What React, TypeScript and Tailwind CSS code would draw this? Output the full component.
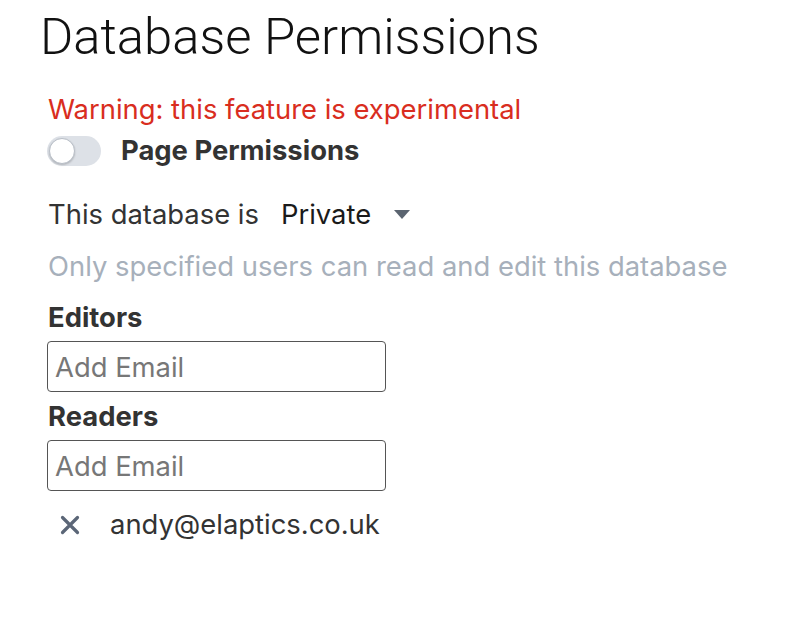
import React from "react";

export default function App() {
  return (
    <div className="w-[800px] h-[617px] bg-white pl-[40px] pt-[7px]" style={{ fontFamily: "Inter, 'Noto Sans', sans-serif" }}>
      <h1 className="text-[50.8px] leading-[60px] text-[#111] font-light" style={{ fontFamily: "Roboto, sans-serif" }}>
        Database Permissions
      </h1>
      <div className="pl-[8px] mt-[22px]">
        <div className="text-[27.4px] leading-[40px] text-[#d92d20]">Warning: this feature is experimental</div>
        <div className="flex items-center gap-[20px] h-[44px]">
          <div className="w-[54px] h-[30px] rounded-full bg-[#dde1e7] relative -ml-[1px]">
            <div className="absolute left-[2px] top-[2px] w-[26px] h-[26px] rounded-full bg-white border border-[#b8bec7] shadow-[0_1px_2px_rgba(0,0,0,0.2)]" />
          </div>
          <span className="text-[27.4px] font-bold text-[#333]">Page Permissions</span>
        </div>
        <div className="flex items-center mt-[22px] h-[40px] text-[27.4px]">
          <span className="text-[#333]">This database is</span>
          <span className="ml-[22px] text-[#1a1a1a]">Private</span>
          <svg className="ml-[22px]" width="18" height="12" viewBox="0 0 18 12">
            <path d="M1 1 L17 1 L9 10 Z" fill="#5b6470" />
          </svg>
        </div>
        <div className="text-[27.4px] text-[#a7b0bb] mt-[11px] leading-[40px]">Only specified users can read and edit this database</div>
        <div className="text-[27.4px] font-bold text-[#333] mt-[11px] leading-[40px]">Editors</div>
        <input
          placeholder="Add Email"
          className="block mt-[4px] w-[339px] h-[51px] -ml-[1px] border border-[#555] rounded-[4px] px-[7px] text-[27.4px] placeholder:text-[#777] outline-none"
        />
        <div className="text-[27.4px] font-bold text-[#333] mt-[4px] leading-[40px]">Readers</div>
        <input
          placeholder="Add Email"
          className="block mt-[4px] w-[339px] h-[51px] -ml-[1px] border border-[#555] rounded-[4px] px-[7px] text-[27.4px] placeholder:text-[#777] outline-none"
        />
        <div className="flex items-center mt-[14px] h-[40px]">
          <svg className="ml-[12px]" width="20" height="20" viewBox="0 0 20 20">
            <path d="M2.5 2.5 L17.5 17.5 M17.5 2.5 L2.5 17.5" stroke="#5b6677" strokeWidth="3.2" strokeLinecap="round" />
          </svg>
          <span className="ml-[30px] text-[27.4px] text-[#333]">andy@elaptics.co.uk</span>
        </div>
      </div>
    </div>
  );
}
